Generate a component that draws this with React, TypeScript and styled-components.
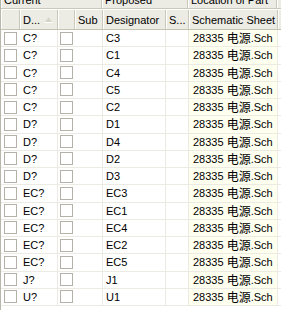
import React from 'react';
import styled, { createGlobalStyle } from 'styled-components';

const GlobalStyle = createGlobalStyle`
  html, body {
    margin: 0;
    padding: 0;
    background: #ffffff;
  }
  body {
    font-family: "Liberation Sans", Arial, "Noto Sans CJK SC", sans-serif;
    font-size: 11px;
    color: #000000;
  }
`;

const COLUMNS = '19px 38px 17px 28px 63px 23px 89px 1fr';

const headerBg = '#ecebe4';
const headerLine = '#c9c7ba';
const gridLine = '#ebeae3';

interface Change {
  current: string;
  proposed: string;
}

const changes: Change[] = [
  { current: 'C?', proposed: 'C3' },
  { current: 'C?', proposed: 'C1' },
  { current: 'C?', proposed: 'C4' },
  { current: 'C?', proposed: 'C5' },
  { current: 'C?', proposed: 'C2' },
  { current: 'D?', proposed: 'D1' },
  { current: 'D?', proposed: 'D4' },
  { current: 'D?', proposed: 'D2' },
  { current: 'D?', proposed: 'D3' },
  { current: 'EC?', proposed: 'EC3' },
  { current: 'EC?', proposed: 'EC1' },
  { current: 'EC?', proposed: 'EC4' },
  { current: 'EC?', proposed: 'EC2' },
  { current: 'EC?', proposed: 'EC5' },
  { current: 'J?', proposed: 'J1' },
  { current: 'U?', proposed: 'U1' },
];

const Table = styled.div`
  width: 281px;
  height: 310px;
  box-sizing: border-box;
  border-left: 1px solid #b9b7ab;
  overflow: hidden;
  display: flex;
  flex-direction: column;
`;

const GroupRow = styled.div`
  display: grid;
  grid-template-columns: 101px 86px 89px 1fr;
  height: 8px;
  overflow: hidden;
  background: ${headerBg};
  border-bottom: 1px solid ${headerLine};
`;

const GroupCell = styled.div<{ $last?: boolean }>`
  display: flex;
  align-items: flex-end;
  padding-left: 3px;
  line-height: 13px;
  white-space: nowrap;
  overflow: hidden;
  border-right: ${p => (p.$last ? 'none' : `1px solid ${headerLine}`)};
  box-shadow: inset 1px 0 0 #ffffff;
  & > span {
    margin-bottom: 1px;
  }
`;

const HeaderRow = styled.div`
  display: grid;
  grid-template-columns: ${COLUMNS};
  height: 19px;
  background: ${headerBg};
  border-top: 1px solid #ffffff;
  border-bottom: 1px solid #c5c2b2;
`;

const HeaderCell = styled.div<{ $last?: boolean }>`
  display: flex;
  align-items: center;
  gap: 4px;
  padding-left: 3px;
  white-space: nowrap;
  overflow: hidden;
  border-right: ${p => (p.$last ? 'none' : `1px solid ${headerLine}`)};
  box-shadow: inset 1px 0 0 #ffffff;
`;

const SortArrow = styled.svg`
  flex: none;
`;

const Row = styled.div`
  display: grid;
  grid-template-columns: ${COLUMNS};
  height: 17.25px;
  box-sizing: border-box;
  border-bottom: 1px solid ${gridLine};
`;

const Cell = styled.div<{ $divider?: boolean; $sheet?: boolean }>`
  display: flex;
  align-items: center;
  padding-left: ${p => (p.$sheet ? '4px' : '3px')};
  white-space: pre;
  overflow: hidden;
  background: ${p => (p.$sheet ? '#fffff0' : 'transparent')};
  border-right: ${p => (p.$divider ? `1px solid ${gridLine}` : 'none')};
`;

const CheckCell = styled.div`
  display: flex;
  align-items: center;
  justify-content: center;
`;

const CheckBox = styled.span`
  display: block;
  width: 11px;
  height: 11px;
  border: 1px solid #b4b2a8;
  background: #ffffff;
`;

const Han = styled.span`
  font-family: "Noto Sans CJK SC", sans-serif;
  font-size: 12px;
  line-height: 14px;
`;

export default function App() {
  return (
    <>
      <GlobalStyle />
      <Table>
        <GroupRow>
          <GroupCell><span>Current</span></GroupCell>
          <GroupCell><span>Proposed</span></GroupCell>
          <GroupCell><span>Location of Part</span></GroupCell>
          <GroupCell $last />
        </GroupRow>
        <HeaderRow>
          <HeaderCell />
          <HeaderCell>
            D...
            <SortArrow width="9" height="6" viewBox="0 0 9 6">
              <path d="M4.5 0.5 L8.5 5.5 L0.5 5.5 Z" fill="#d6d3c6" />
              <path d="M0.5 5.5 L8.5 5.5" stroke="#ffffff" strokeWidth="1" />
            </SortArrow>
          </HeaderCell>
          <HeaderCell />
          <HeaderCell>Sub</HeaderCell>
          <HeaderCell>Designator</HeaderCell>
          <HeaderCell>S...</HeaderCell>
          <HeaderCell>Schematic Sheet</HeaderCell>
          <HeaderCell $last />
        </HeaderRow>
        {changes.map((c, i) => (
          <Row key={i}>
            <CheckCell><CheckBox /></CheckCell>
            <Cell $divider>{c.current}</Cell>
            <CheckCell><CheckBox /></CheckCell>
            <Cell $divider />
            <Cell $divider>{c.proposed}</Cell>
            <Cell $divider />
            <Cell $sheet $divider>
              {'28335 '}<Han>电源</Han>.Sch
            </Cell>
            <Cell />
          </Row>
        ))}
      </Table>
    </>
  );
}
